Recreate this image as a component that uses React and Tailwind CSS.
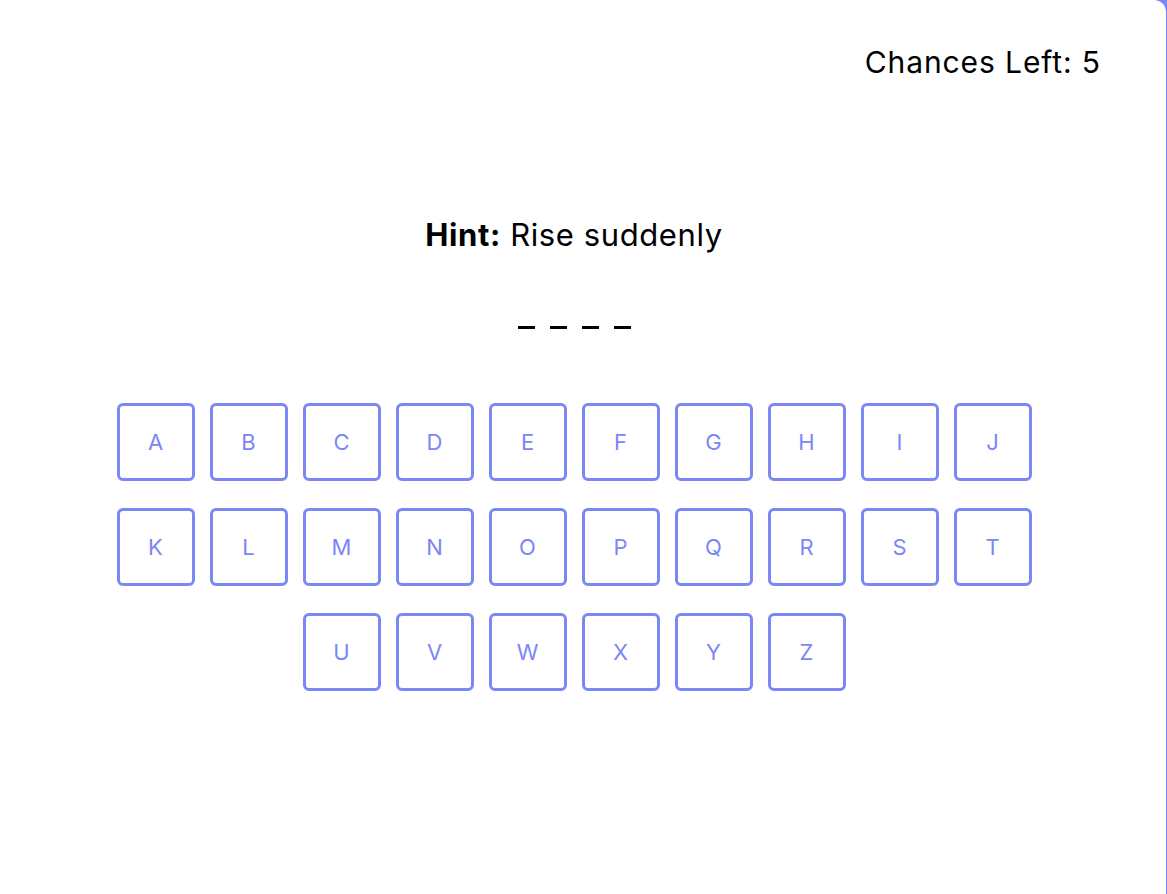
const rows = [
  ['A', 'B', 'C', 'D', 'E', 'F', 'G', 'H', 'I', 'J'],
  ['K', 'L', 'M', 'N', 'O', 'P', 'Q', 'R', 'S', 'T'],
  ['U', 'V', 'W', 'X', 'Y', 'Z'],
]

function Key({ letter }) {
  return (
    <button className="w-[78px] h-[78px] border-[3px] border-[#7b86f7] rounded-[6px] flex items-center justify-center text-[22px] text-[#7b86f7] bg-white">
      {letter}
    </button>
  )
}

export default function App() {
  return (
    <div
      className="w-full h-[894px] bg-[#7b86f7] overflow-hidden"
      style={{ fontFamily: 'Inter, "Open Sans", sans-serif' }}
    >
      <div className="w-[1166px] h-full bg-white rounded-tr-[12px] flex flex-col">
        {/* top bar */}
        <div className="flex justify-end pr-[65px] pt-[42px]">
          <span className="text-[30px] leading-[40px] tracking-[0.9px] text-black">Chances Left: 5</span>
        </div>

        {/* game area */}
        <div className="w-[1148px] flex flex-col items-center">
          <p className="mt-[133px] text-[31px] leading-[40px] tracking-[0.6px] text-black">
            <span className="font-bold">Hint:</span> Rise suddenly
          </p>

          <div className="mt-[71px] flex gap-[15px]">
            {[0, 1, 2, 3].map((i) => (
              <div key={i} className="w-[17px] h-[3px] bg-black" />
            ))}
          </div>

          <div className="mt-[74px] flex flex-col items-center gap-[27px]">
            {rows.map((row, i) => (
              <div key={i} className="flex gap-[15px]">
                {row.map((l) => (
                  <Key key={l} letter={l} />
                ))}
              </div>
            ))}
          </div>
        </div>
      </div>
    </div>
  )
}
